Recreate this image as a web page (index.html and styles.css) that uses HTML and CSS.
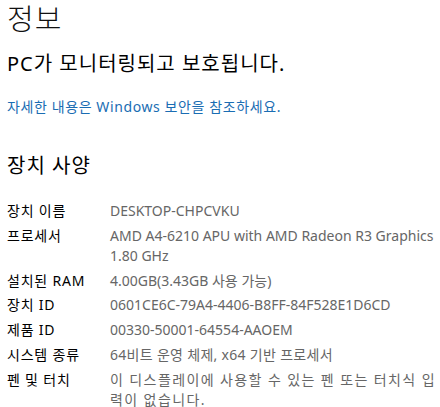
FILE: index.html
```html
<!DOCTYPE html>
<html lang="ko">
<head>
<meta charset="utf-8">
<link rel="stylesheet" href="styles.css">
</head>
<body>
<main class="page">
  <h1 class="title">정보</h1>
  <p class="status">PC가 모니터링되고 보호됩니다.</p>
  <a class="link" href="#">자세한 내용은 Windows 보안을 참조하세요.</a>
  <h2 class="section">장치 사양</h2>
  <dl class="specs">
    <dt>장치 이름</dt><dd>DESKTOP-CHPCVKU</dd>
    <dt>프로세서</dt><dd>AMD A4-6210 APU with AMD Radeon R3 Graphics 1.80 GHz</dd>
    <dt>설치된 RAM</dt><dd>4.00GB(3.43GB 사용 가능)</dd>
    <dt>장치 ID</dt><dd>0601CE6C-79A4-4406-B8FF-84F528E1D6CD</dd>
    <dt>제품 ID</dt><dd>00330-50001-64554-AAOEM</dd>
    <dt>시스템 종류</dt><dd class="ko">64비트 운영 체제, x64 기반 프로세서</dd>
    <dt>펜 및 터치</dt><dd class="wrap">이 디스플레이에 사용할 수 있는 펜 또는 터치식 입력이 없습니다.</dd>
  </dl>
</main>
</body>
</html>
```
FILE: styles.css
```css
html, body {
  margin: 0;
  padding: 0;
  background: #ffffff;
}
.page {
  padding: 0 0 0 7px;
  font-family: "Noto Sans", "Noto Sans CJK KR", sans-serif;
  color: #000;
}
.title {
  margin: 0;
  font-family: "Noto Sans CJK KR", sans-serif;
  font-weight: 300;
  font-size: 29px;
  line-height: 34px;
  letter-spacing: 1px;
  color: #111;
}
.status {
  margin: 16px 0 0;
  font-size: 20px;
  line-height: 28px;
  font-weight: 400;
  letter-spacing: 1px;
}
.link {
  display: block;
  margin-top: 19px;
  font-size: 14px;
  line-height: 20px;
  letter-spacing: 0.6px;
  color: #1a6db3;
  text-decoration: none;
}
.section {
  margin: 34px 0 0;
  padding-top: 1px;
  font-size: 20px;
  line-height: 28px;
  font-weight: 400;
  letter-spacing: 1px;
}
.specs {
  margin: 21px 0 0;
  display: grid;
  grid-template-columns: 103px 1fr;
  row-gap: 4.75px;
  font-size: 14px;
  line-height: 20px;
}
.specs dt {
  color: #000;
  letter-spacing: 0.8px;
}
.specs dd {
  margin: 0;
  color: #666;
}
.specs .ko {
  letter-spacing: 0.3px;
}
.specs .wrap {
  word-break: break-all;
  letter-spacing: 1.4px;
}
```
